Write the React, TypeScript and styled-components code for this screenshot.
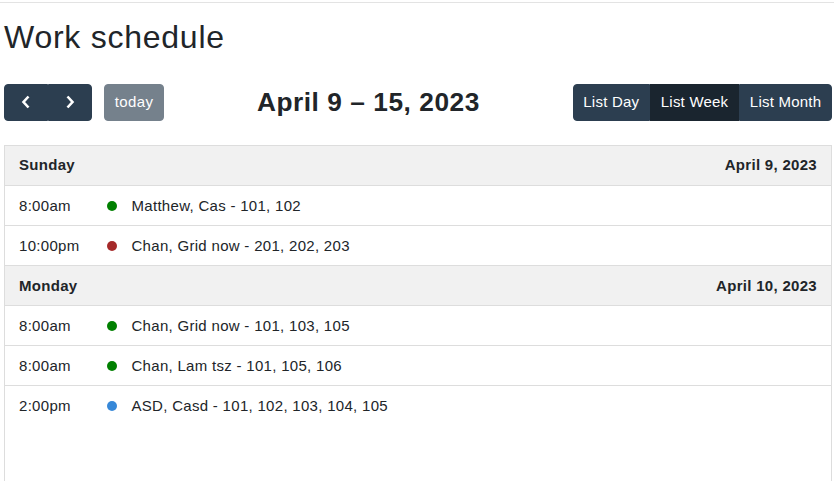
import React from "react";
import styled, { createGlobalStyle } from "styled-components";

const Global = createGlobalStyle`
  html, body { margin: 0; padding: 0; background: #fff; overflow: hidden; }
  body { font-family: "Liberation Sans", Arial, sans-serif; color: #212529; }
`;

const Page = styled.div`
  padding: 0 2px 0 4px;
  height: 481px;
  box-sizing: border-box;
`;

const TopRule = styled.div`
  height: 1px;
  background: #e3e3e3;
  margin: 2px -2px 0 -4px;
`;

const Heading = styled.h2`
  margin: 15px 0 0 0;
  font-size: 32px;
  font-weight: 400;
  line-height: 38px;
  letter-spacing: 0.75px;
  color: #212529;
`;

const Toolbar = styled.div`
  display: flex;
  align-items: center;
  justify-content: space-between;
  margin-top: 28px;
  margin-bottom: 24px;
`;

const Chunk = styled.div`
  display: flex;
  align-items: center;
  gap: 12px;
`;

const Group = styled.div`
  display: flex;
`;

const Button = styled.button<{ $active?: boolean; $disabled?: boolean; $pos?: "first" | "mid" | "last" | "single" }>`
  font-family: "Liberation Sans", Arial, sans-serif;
  font-size: 15px;
  letter-spacing: ${(p) => (p.$pos === "single" ? "0.4px" : "0.22px")};
  line-height: 22.5px;
  padding: 6px 9.75px;
  border: 1px solid ${(p) => (p.$active ? "#1a252f" : "#2c3e50")};
  background: ${(p) => (p.$active ? "#1a252f" : "#2c3e50")};
  color: #fff;
  opacity: ${(p) => (p.$disabled ? 0.65 : 1)};
  display: flex;
  align-items: center;
  justify-content: center;
  cursor: pointer;
  border-radius: ${(p) =>
    p.$pos === "first"
      ? "4px 0 0 4px"
      : p.$pos === "last"
      ? "0 4px 4px 0"
      : p.$pos === "mid"
      ? "0"
      : "4px"};
`;

const IconBox = styled.span`
  width: 22.5px;
  height: 22.5px;
  display: flex;
  align-items: center;
  justify-content: center;
`;

const Title = styled.h2`
  margin: 0;
  font-size: 26.25px;
  font-weight: 700;
  letter-spacing: 0.55px;
  color: #212529;
`;

const List = styled.div`
  border: 1px solid #ddd;
  height: 400px;
  box-sizing: border-box;
`;

const Table = styled.table`
  width: 100%;
  border-collapse: collapse;
  font-size: 15px;
  letter-spacing: 0.3px;
`;

const DayRow = styled.tr`
  background: #f1f1f1;
`;

const DayCell = styled.th<{ $right?: boolean }>`
  text-align: ${(p) => (p.$right ? "right" : "left")};
  font-weight: 700;
  padding: 8px 14px;
  height: 40px;
  box-sizing: border-box;
  line-height: 22px;
  border-bottom: 1px solid #ddd;
  color: #212529;
`;

const EventRow = styled.tr`
  &:last-child td {
    border-bottom: none;
  }
`;

const Cell = styled.td<{ $shrink?: boolean; $graphic?: boolean }>`
  padding: 8px 14px;
  padding-right: ${(p) => (p.$graphic ? "0" : "14px")};
  height: 40px;
  box-sizing: border-box;
  line-height: 22px;
  border-bottom: 1px solid #ddd;
  white-space: nowrap;
  width: ${(p) => (p.$shrink ? "1px" : "auto")};
  color: #212529;
`;

const Dot = styled.span<{ $color: string }>`
  display: inline-block;
  width: 10px;
  height: 10px;
  border-radius: 5px;
  background: ${(p) => p.$color};
  vertical-align: middle;
  margin-top: -2px;
`;

const Chevron = ({ dir }: { dir: "l" | "r" }) => (
  <svg width="10" height="14" viewBox="0 0 10 14">
    <path
      d={dir === "l" ? "M7.5 1.5 L2.5 7 L7.5 12.5" : "M2.5 1.5 L7.5 7 L2.5 12.5"}
      fill="none"
      stroke="#fff"
      strokeWidth="2.6"
    />
  </svg>
);

type Ev = { time: string; color: string; title: string };
const days: { name: string; date: string; events: Ev[] }[] = [
  {
    name: "Sunday",
    date: "April 9, 2023",
    events: [
      { time: "8:00am", color: "#008000", title: "Matthew, Cas - 101, 102" },
      { time: "10:00pm", color: "#a52a2a", title: "Chan, Grid now - 201, 202, 203" },
    ],
  },
  {
    name: "Monday",
    date: "April 10, 2023",
    events: [
      { time: "8:00am", color: "#008000", title: "Chan, Grid now - 101, 103, 105" },
      { time: "8:00am", color: "#008000", title: "Chan, Lam tsz - 101, 105, 106" },
      { time: "2:00pm", color: "#3788d8", title: "ASD, Casd - 101, 102, 103, 104, 105" },
    ],
  },
];

export default function App() {
  return (
    <Page>
      <Global />
      <TopRule />
      <Heading>Work schedule</Heading>
      <Toolbar>
        <Chunk>
          <Group>
            <Button $pos="first" aria-label="prev">
              <IconBox>
                <Chevron dir="l" />
              </IconBox>
            </Button>
            <Button $pos="last" aria-label="next">
              <IconBox>
                <Chevron dir="r" />
              </IconBox>
            </Button>
          </Group>
          <Button $pos="single" $disabled>
            today
          </Button>
        </Chunk>
        <Title>April 9 – 15, 2023</Title>
        <Group>
          <Button $pos="first">List Day</Button>
          <Button $pos="mid" $active>
            List Week
          </Button>
          <Button $pos="last">List Month</Button>
        </Group>
      </Toolbar>
      <List>
        <Table>
          <tbody>
            {days.map((d) => (
              <React.Fragment key={d.name}>
                <DayRow>
                  <DayCell colSpan={2}>{d.name}</DayCell>
                  <DayCell $right>{d.date}</DayCell>
                </DayRow>
                {d.events.map((e, i) => (
                  <EventRow key={i}>
                    <Cell $shrink>{e.time}</Cell>
                    <Cell $shrink $graphic>
                      <Dot $color={e.color} />
                    </Cell>
                    <Cell>{e.title}</Cell>
                  </EventRow>
                ))}
              </React.Fragment>
            ))}
          </tbody>
        </Table>
      </List>
    </Page>
  );
}
